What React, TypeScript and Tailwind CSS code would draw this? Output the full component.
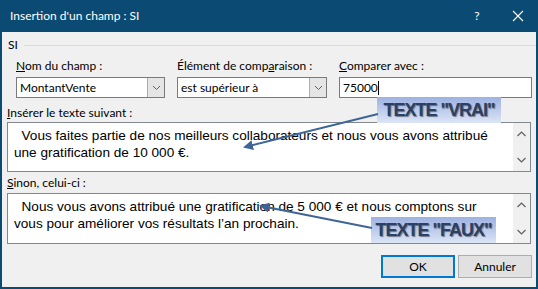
import React from 'react';

const ui = { fontFamily: 'Lato, "Noto Sans", sans-serif' };
const arial = { fontFamily: '"Liberation Sans", Arial, sans-serif' };

function Chevron({ up = false }: { up?: boolean }) {
  return (
    <svg width="9" height="6" viewBox="0 0 9 6" className={up ? 'rotate-180' : ''}>
      <path d="M0.5 1 L4.5 5 L8.5 1" fill="none" stroke="#606060" strokeWidth="1.2" />
    </svg>
  );
}

function Combo({ value, width }: { value: string; width: string }) {
  return (
    <div className={`${width} h-[21px] flex bg-white border border-[#7a7a7a]`}>
      <div className="flex-1 flex items-center px-[3px] text-[12px] text-black">{value}</div>
      <div className="w-[17px] h-full bg-[#e5e5e5] border-l border-[#acacac] flex items-center justify-center">
        <svg width="9" height="6" viewBox="0 0 9 6">
          <path d="M1 1 L4.5 4.5 L8 1" fill="none" stroke="#606060" strokeWidth="1" />
        </svg>
      </div>
    </div>
  );
}

function TextBox({ lines, height }: { lines: string[]; height: string }) {
  return (
    <div className={`${height} flex bg-white border border-[#828790]`} style={arial}>
      <div className="flex-1 pl-[6px] pt-[4px] text-[13.6px] leading-[17px] text-black whitespace-pre">
        {lines.map((l, i) => (
          <div key={i}>{l}</div>
        ))}
      </div>
      <div className="w-[17px] bg-[#f0f0f0] flex flex-col items-center justify-between py-[8px]">
        <Chevron up />
        <Chevron />
      </div>
    </div>
  );
}

function Callout({ text, className }: { text: string; className: string }) {
  return (
    <div
      className={`absolute h-[26px] flex items-center justify-center bg-gradient-to-b from-[#9db2e2] to-[#dde5f6] text-[18px] font-bold tracking-[-1px] text-[#2b4064] [text-shadow:1px_1px_1px_rgba(0,0,0,0.45)] ${className}`}
      style={arial}
    >
      {text}
    </div>
  );
}

export default function App() {
  return (
    <div className="relative w-[538px] h-[289px] bg-[#0b4a72] flex flex-col overflow-hidden" style={ui}>
      {/* Title bar */}
      <div className="h-[32px] flex items-center pl-[10px] text-white text-[12px]">
        <span className="flex-1">Insertion d'un champ : SI</span>
        <span className="w-[20px] text-center mr-[25px]">?</span>
        <svg width="12" height="12" viewBox="0 0 12 12" className="mr-[14px]">
          <path d="M1 1 L11 11 M11 1 L1 11" stroke="white" strokeWidth="1.1" />
        </svg>
      </div>

      {/* Body */}
      <div className="flex-1 mx-[2px] mb-[2px] bg-[#f0f0f0] text-[12px] text-black flex flex-col">
        <div className="flex items-center mt-[5px] pl-[6px] h-[16px]">
          <span>SI</span>
          <div className="flex-1 h-px bg-[#dcdcdc] ml-[6px]" />
        </div>

        <div className="flex gap-[12px] pl-[14px] mt-[5px]">
          <div className="flex flex-col">
            <span className="leading-[16px]"><u>N</u>om du champ :</span>
            <div className="mt-[3px]">
              <Combo value="MontantVente" width="w-[149px]" />
            </div>
          </div>
          <div className="flex flex-col">
            <span className="leading-[16px]">Élément de comp<u>a</u>raison :</span>
            <div className="mt-[3px]">
              <Combo value="est supérieur à" width="w-[150px]" />
            </div>
          </div>
          <div className="flex flex-col">
            <span className="leading-[16px]"><u>C</u>omparer avec :</span>
            <div className="mt-[3px] w-[193px] h-[21px] bg-white border border-[#7a7a7a] flex items-center px-[3px]">
              75000<span className="w-px h-[14px] bg-black" />
            </div>
          </div>
        </div>

        <div className="px-[5px] mt-[7px]">
          <span className="leading-[16px] block"><u>I</u>nsérer le texte suivant :</span>
          <div className="mt-[1px]">
            <TextBox
              height="h-[50px]"
              lines={[
                '  Vous faites partie de nos meilleurs collaborateurs et nous vous avons attribué',
                'une gratification de 10 000 €.',
              ]}
            />
          </div>
          <span className="leading-[16px] block mt-[3px]"><u>S</u>inon, celui-ci :</span>
          <div className="mt-[2px]">
            <TextBox
              height="h-[51px]"
              lines={[
                '  Nous vous avons attribué une gratification de 5 000 € et nous comptons sur',
                'vous pour améliorer vos résultats l\u2019an prochain.',
              ]}
            />
          </div>
        </div>

        <div className="flex justify-end gap-[3px] pr-[4px] mt-[11px]">
          <button className="w-[74px] h-[23px] bg-[#e1e1e1] border-2 border-[#0078d7] text-[12px]">OK</button>
          <button className="w-[74px] h-[23px] bg-[#e1e1e1] border border-[#adadad] text-[12px]">Annuler</button>
        </div>
      </div>

      {/* Annotations */}
      <Callout text={'TEXTE "VRAI"'} className="left-[377px] top-[97px] w-[124px]" />
      <Callout text={'TEXTE "FAUX"'} className="left-[371px] top-[217px] w-[125px]" />
      <svg className="absolute left-0 top-0 pointer-events-none" width="538" height="289">
        <defs>
          <marker id="ah" viewBox="0 0 10 10" refX="8" refY="5" markerWidth="5" markerHeight="5" orient="auto">
            <path d="M0 0 L10 5 L0 10 z" fill="#3f6596" />
          </marker>
        </defs>
        <line x1="378" y1="114" x2="245" y2="147" stroke="#3f6596" strokeWidth="2" markerEnd="url(#ah)" />
        <line x1="372" y1="228" x2="261" y2="206" stroke="#3f6596" strokeWidth="2" markerEnd="url(#ah)" />
      </svg>
    </div>
  );
}
